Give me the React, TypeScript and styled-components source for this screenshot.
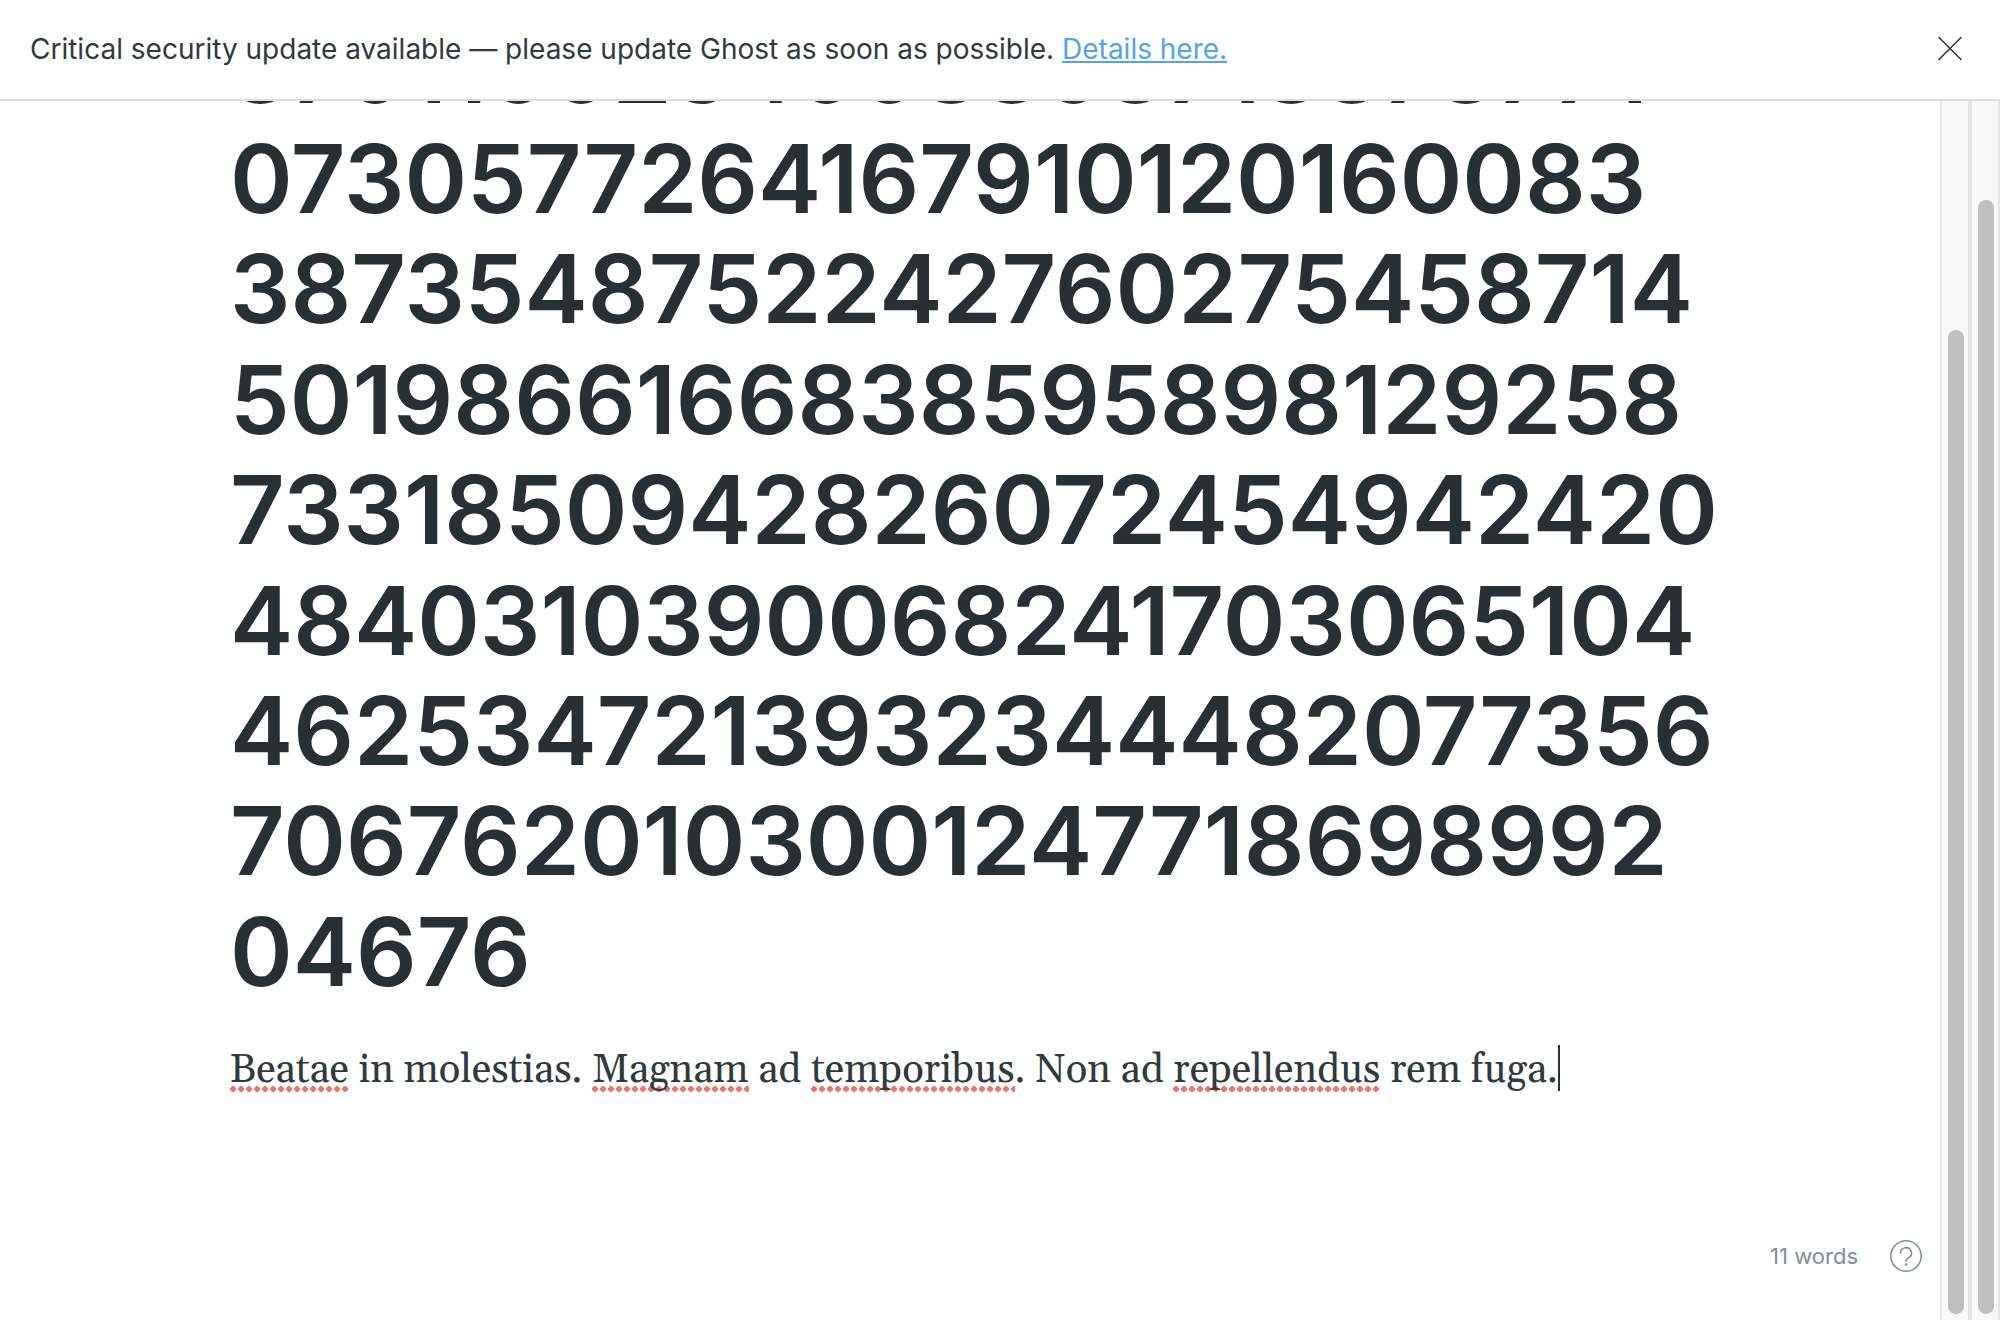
import React from "react";
import styled, { createGlobalStyle } from "styled-components";

const Global = createGlobalStyle`
  *, *::before, *::after { box-sizing: border-box; }
  body {
    margin: 0;
    background: #fff;
    color: #283033;
    font-family: Inter, "Liberation Sans", sans-serif;
  }
`;

const Page = styled.div`
  display: flex;
  flex-direction: column;
  height: 100vh;
  overflow: hidden;
`;

const Banner = styled.aside`
  display: flex;
  flex: none;
  align-items: center;
  justify-content: space-between;
  padding: 32px 36px 32px 30px;
  border-bottom: 2px solid #ddd;
  font-size: 28px;
  line-height: 35px;
  color: #30393d;
`;

const BannerText = styled.p`
  margin: 0;
`;

const BannerLink = styled.a`
  color: #54a3ea;
  text-decoration-line: underline;
  text-decoration-thickness: 2px;
  text-underline-offset: 2px;
`;

const IconButton = styled.button`
  display: flex;
  padding: 0;
  border: 0;
  background: none;
  color: inherit;
  cursor: pointer;
`;

const Workspace = styled.div`
  display: flex;
  flex: 1;
  min-height: 0;
`;

const Editor = styled.main`
  position: relative;
  display: flex;
  flex: 1;
  flex-direction: column;
  align-items: center;
  justify-content: flex-end;
  min-width: 0;
  padding: 0 200px 217px 230px;
  overflow: hidden;
`;

const Title = styled.textarea`
  display: block;
  flex: none;
  width: 100%;
  margin: 0 0 32px;
  padding: 0;
  border: 0;
  outline: 0;
  resize: none;
  overflow: hidden;
  background: transparent;
  color: #283033;
  font: 600 95px/1.162 Inter, "Liberation Sans", sans-serif;
  white-space: pre;
`;

const Body = styled.p`
  width: 100%;
  margin: 0;
  outline: 0;
  color: #30393d;
  font: 40px/64px Gelasio, Georgia, "Liberation Serif", serif;
  white-space: nowrap;
`;

const Misspelled = styled.span`
  background: radial-gradient(circle 3px at 3px 3px, #f0736b 90%, transparent 100%) left bottom 4px / 8px 6px repeat-x;
`;

const Caret = styled.span`
  display: inline-block;
  width: 2px;
  height: 46px;
  background: #283033;
  vertical-align: -9px;
`;

const Status = styled.footer`
  position: absolute;
  right: 18px;
  bottom: 48px;
  display: flex;
  align-items: center;
  gap: 32px;
  color: #7c8f9b;
  font-size: 22px;
  line-height: 32px;
`;

const Track = styled.div`
  flex: none;
  display: flex;
  width: 30px;
  padding: 0 4px 6px 6px;
  border-left: 2px solid #e6e6e6;
  border-right: 2px solid #e6e6e6;
  background: #f9f9f9;
`;

const Thumb = styled.div<{ $top: number }>`
  flex: 1;
  margin-top: ${(p) => p.$top}px;
  border-radius: 8px;
  background: #bfbfbf;
`;

const titleLines = [
  "8701100234008808718878771",
  "0730577264167910120160083",
  "3873548752242760275458714",
  "5019866166838595898129258",
  "7331850942826072454942420",
  "4840310390068241703065104",
  "4625347213932344482077356",
  "7067620103001247718698992",
  "04676",
];

export default function App() {
  return (
    <>
      <Global />
      <Page>
        <Banner role="alert">
          <BannerText>
            Critical security update available — please update Ghost as soon as possible.{" "}
            <BannerLink href="#details">Details here.</BannerLink>
          </BannerText>
          <IconButton type="button" aria-label="Close">
            <svg width="28" height="28" viewBox="0 0 28 28" fill="none" stroke="currentColor" strokeWidth="1.6" strokeLinecap="round">
              <path d="M3 1.500 25 23.500M25 1.500 3 23.500" />
            </svg>
          </IconButton>
        </Banner>
        <Workspace>
          <Editor>
            <Title
              aria-label="Post title"
              rows={titleLines.length}
              spellCheck={false}
              defaultValue={titleLines.join("\n")}
            />
            <Body>
              <Misspelled>Beatae</Misspelled> in molestias. <Misspelled>Magnam</Misspelled> ad{" "}
              <Misspelled>temporibus</Misspelled>. Non ad <Misspelled>repellendus</Misspelled> rem fuga.
              <Caret />
            </Body>
            <Status>
              <span>11 words</span>
              <IconButton type="button" aria-label="Help">
                <svg width="32" height="32" viewBox="0 0 32 32" fill="none" stroke="currentColor" strokeWidth="1.6" strokeLinecap="round">
                  <circle cx="16" cy="16" r="15.2" />
                  <path d="M10.600 13a5.400 5.400 0 1 1 7.700 4.900c-1.500.7-2.300 1.300-2.300 2.600V21.300" />
                  <circle cx="16" cy="24.500" r="0.500" fill="currentColor" />
                </svg>
              </IconButton>
            </Status>
          </Editor>
          <Track>
            <Thumb $top={229} />
          </Track>
          <Track>
            <Thumb $top={99} />
          </Track>
        </Workspace>
      </Page>
    </>
  );
}
